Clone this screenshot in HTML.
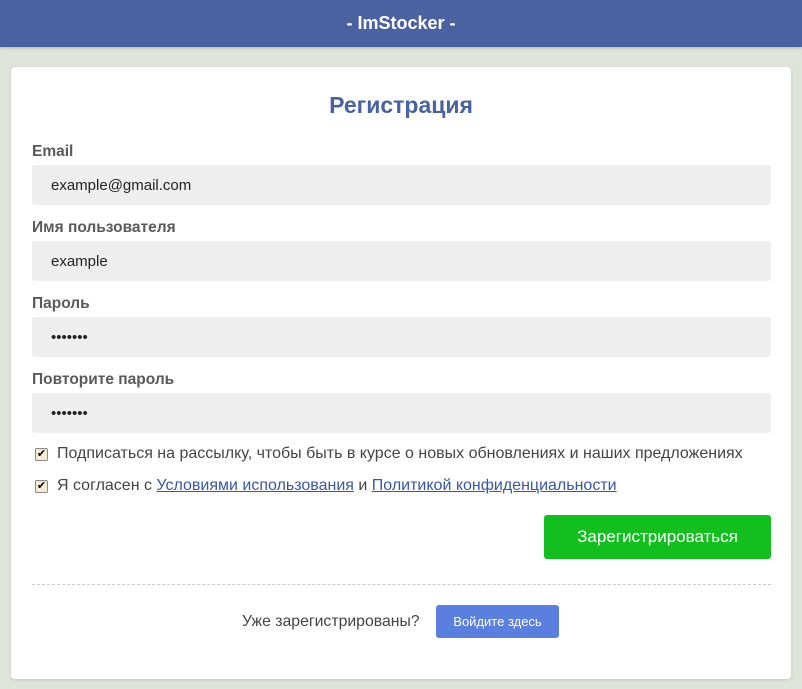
<!DOCTYPE html>
<html><head><meta charset="utf-8"><style>
*{box-sizing:border-box;margin:0;padding:0}
body{width:802px;height:689px;background:#dfe3da;font-family:"Liberation Sans","DejaVu Sans",sans-serif;position:relative;overflow:hidden}
.hdr{position:absolute;left:0;top:0;width:802px;height:47px;background:#4a62a0;color:#fff;font-weight:bold;font-size:18px;text-align:center;line-height:47px;box-shadow:0 1px 3px rgba(0,0,0,.2)}
.card{position:absolute;left:11px;top:67px;width:780px;height:612px;background:#fff;border-radius:4px;box-shadow:0 1px 3px rgba(0,0,0,.12)}
h1{position:absolute;left:0;width:780px;top:25px;text-align:center;color:#4a62a0;font-size:23px;font-weight:bold}
.lbl{position:absolute;left:21px;font-weight:bold;color:#5a5a5a;font-size:15.5px}
.inp{position:absolute;left:21px;width:739px;height:40px;background:#eeeeee;border-radius:3px;font-size:15px;color:#222;padding-left:19px;line-height:42px}
.chk{position:absolute;left:24px;font-size:16px;color:#444;display:flex;align-items:center}
.box{width:13px;height:13px;border:1px solid #888;background:#f5ecd6;border-radius:2px;margin-right:9px;font-size:11px;line-height:11px;text-align:center;color:#000}
a{color:#3a56a5;text-decoration:underline}
.btn{position:absolute;left:533px;top:448px;width:227px;height:44px;background:#12bf1f;border-radius:3px;color:#fff;font-size:17px;text-align:center;line-height:44px}
.hr{position:absolute;left:21px;top:517px;width:739px;border-top:1px dashed #ccc}
.q{position:absolute;left:231px;top:546px;font-size:15.8px;color:#444}
.btn2{position:absolute;left:425px;top:538px;width:123px;height:33px;background:#5b7fde;border-radius:3px;color:#fff;font-size:13px;text-align:center;line-height:34px}
</style></head><body>
<div class="hdr">- ImStocker -</div>
<div class="card">
<h1>Регистрация</h1>
<div class="lbl" style="top:76px">Email</div>
<div class="inp" style="top:98px">example@gmail.com</div>
<div class="lbl" style="top:152px">Имя пользователя</div>
<div class="inp" style="top:174px">example</div>
<div class="lbl" style="top:228px">Пароль</div>
<div class="inp" style="top:250px">•••••••</div>
<div class="lbl" style="top:304px">Повторите пароль</div>
<div class="inp" style="top:326px">•••••••</div>
<div class="chk" style="top:378px"><span class="box">✔</span>Подписаться на рассылку, чтобы быть в курсе о новых обновлениях и наших предложениях</div>
<div class="chk" style="top:410px"><span class="box">✔</span>Я согласен с&nbsp;<a>Условиями использования</a>&nbsp;и&nbsp;<a>Политикой конфиденциальности</a></div>
<div class="btn">Зарегистрироваться</div>
<div class="hr"></div>
<div class="q">Уже зарегистрированы?</div>
<div class="btn2">Войдите здесь</div>
</div>
</body></html>
